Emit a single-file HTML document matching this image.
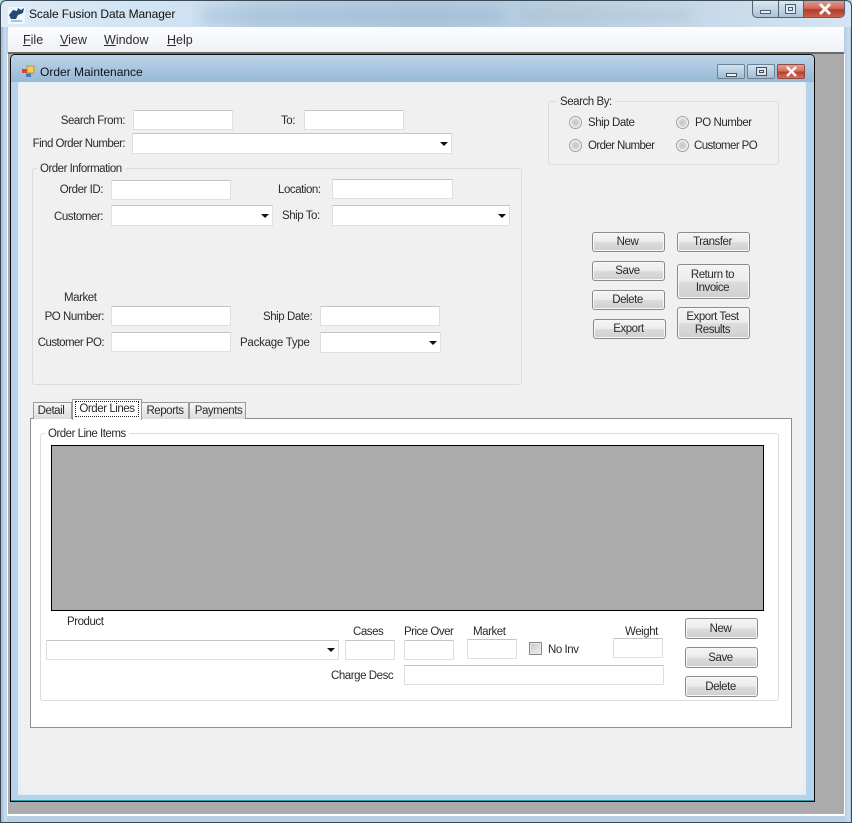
<!DOCTYPE html>
<html><head><meta charset="utf-8"><style>
html,body{margin:0;padding:0;width:852px;height:823px;overflow:hidden}
body{position:relative;background:#b9d3ea;font:11.5px "Liberation Sans",sans-serif;color:#222;letter-spacing:-.45px}
div,span{position:absolute;box-sizing:border-box}
.l{white-space:nowrap;line-height:14px;height:15px;padding-top:1px;color:#2a2a2a}
.r{text-align:right}
.c{text-align:center}
.i{background:#fff;border:1px solid #dfdfdf;border-top-color:#c4c4c4;border-radius:1px}
.a{width:0;height:0;border-left:4px solid transparent;border-right:4px solid transparent;border-top:4px solid #111}
.g{border:1px solid #dcdcdc;border-radius:3px}
.t{background:#f0f0f0;padding:1px 3px 0;white-space:nowrap;line-height:14px;height:14px;color:#2a2a2a}
.b{border:1px solid #8a8a8a;border-radius:3px;background:linear-gradient(#f4f4f4 0,#ececec 48%,#dcdcdc 52%,#cfcfcf 100%);box-shadow:inset 0 0 0 1px #f8f8f8;text-align:center;line-height:13px;color:#2a2a2a;display:flex;align-items:center;justify-content:center;padding:1px 2px 0 0}
.o{width:13px;height:13px;border-radius:50%;border:1px solid #a0a0a0;background:radial-gradient(circle,#c8c8c8 0,#d0d0d0 38%,#f4f4f4 66%,#e8e8e8 100%)}
.tab{background:linear-gradient(#f6f6f6,#dcdcdc);border:1px solid #9a9a9a;border-bottom:0;line-height:16px;text-align:center;color:#2a2a2a}
u{text-decoration:underline}
.m{letter-spacing:0;font-size:12.5px}
</style></head><body>
<!-- frame -->
<div style="left:0;top:0;width:852px;height:823px;background:linear-gradient(90deg,#9fbbd3 0,#c7dcee 4px,#b6cfe4 8px,#b6cfe4 844px,#c9def0 848px,#8ea9c0 852px);border:1px solid #3c4a55;border-radius:6px 6px 0 0"></div>
<div style="left:1px;top:1px;width:850px;height:26px;background:linear-gradient(90deg,#dcebf7 0,#cfe2f2 22%,#b9d0e4 30%,#b0c9df 50%,#b9d0e3 68%,#c9dbea 85%,#d5e5f2 100%);border-radius:6px 6px 0 0;overflow:hidden">
<div style="left:200px;top:8px;width:300px;height:14px;background:#8fabc8;filter:blur(5px);opacity:.3"></div>
<div style="left:520px;top:8px;width:170px;height:12px;background:#a6b8c0;filter:blur(5px);opacity:.3"></div>
</div>
<div style="left:8px;top:7px;width:17px;height:17px;background:#f2f6f8"></div>
<svg style="position:absolute;left:8px;top:7px" width="17" height="17" viewBox="0 0 17 17"><path d="M1 8 L5 3 L9 4 L10 1 L13 3 L16 1 L15 6 L10 8 L8 12 L3 12Z" fill="#1f4d78"/><path d="M3 14h11" stroke="#6e93b0" stroke-width="1"/></svg>
<div class="l" style="left:29px;top:6px;font-size:12px;color:#111;letter-spacing:-.1px">Scale Fusion Data Manager</div>
<!-- caption buttons -->
<div style="left:752px;top:1px;width:93px;height:17px;border:1px solid #55626e;border-top:0;border-radius:0 0 5px 5px;overflow:hidden;background:linear-gradient(#dbe8f3,#aac2d7)">
<div style="left:25px;top:0;width:1px;height:16px;background:#55626e"></div>
<div style="left:50px;top:0;width:1px;height:16px;background:#55626e"></div>
<div style="left:51px;top:0;width:41px;height:16px;background:linear-gradient(#dd9a90 0,#cf6a5c 45%,#b8392a 55%,#c9604f 100%)"></div>
<div style="left:7px;top:9px;width:11px;height:4px;background:#e9eff5;border:1px solid #4f5d6a"></div>
<div style="left:32px;top:3px;width:11px;height:10px;border:1px solid #4f5d6a;background:#dfe9f2"><div style="left:2px;top:2px;width:5px;height:4px;border:1px solid #4f5d6a"></div></div>
<svg style="position:absolute;left:65px;top:2px" width="14" height="12" viewBox="0 0 14 12"><path d="M2 1 L12 11 M12 1 L2 11" stroke="#f4f4f4" stroke-width="3"/></svg>
</div>
<!-- menu -->
<div style="left:8px;top:27px;width:836px;height:25px;background:linear-gradient(#fdfdfe,#eef1f5)"></div>
<div style="left:8px;top:52px;width:836px;height:2px;background:#6a6a6a"></div>
<div class="l m" style="left:23px;top:32px"><u>F</u>ile</div>
<div class="l m" style="left:60px;top:32px"><u>V</u>iew</div>
<div class="l m" style="left:104px;top:32px"><u>W</u>indow</div>
<div class="l m" style="left:167px;top:32px"><u>H</u>elp</div>
<!-- MDI -->
<div style="left:8px;top:54px;width:836px;height:760px;background:#ababab"></div>
<div style="left:8px;top:814px;width:836px;height:2px;background:#fff"></div>
<div style="left:7px;top:54px;width:1px;height:762px;background:#fff"></div>
<div style="left:844px;top:54px;width:1px;height:762px;background:#fff"></div>
<!-- child -->
<div style="left:10px;top:54px;width:805px;height:748px;background:#b6d3ec;border:1px solid #0c0c0c;border-bottom-width:2px;border-radius:5px 5px 0 0"></div>
<div style="left:11px;top:800px;width:803px;height:1px;background:#2f9fb0"></div>
<div style="left:11px;top:55px;width:803px;height:27px;background:linear-gradient(#bcd3e8 0,#97b9d6 100%);border-radius:4px 4px 0 0"></div>
<svg style="position:absolute;left:21px;top:65px" width="14" height="13" viewBox="0 0 14 13"><rect x="6" y="1" width="7" height="7" fill="#f4cf57" stroke="#b8962f"/><rect x="1" y="4" width="5" height="4" fill="#d9452f"/><rect x="5" y="8.5" width="5" height="3.5" fill="#4a79c4"/></svg>
<div class="l" style="left:40px;top:64px;font-size:12px;color:#111;letter-spacing:0">Order Maintenance</div>
<div style="left:717px;top:64px;width:28px;height:15px;border:1px solid #6d8298;border-radius:2px;background:linear-gradient(#d3e2ef,#9fbbd3)"><div style="left:8px;top:8px;width:11px;height:4px;background:#eef3f7;border:1px solid #444f5a"></div></div>
<div style="left:747px;top:64px;width:28px;height:15px;border:1px solid #6d8298;border-radius:2px;background:linear-gradient(#d3e2ef,#9fbbd3)"><div style="left:8px;top:2px;width:11px;height:9px;background:#dde7f0;border:1px solid #444f5a"><div style="left:2px;top:2px;width:5px;height:3px;border:1px solid #444f5a"></div></div></div>
<div style="left:777px;top:64px;width:28px;height:15px;border:1px solid #8e4a42;border-radius:2px;background:linear-gradient(#e0a196 0,#d2705f 45%,#bd3d2c 55%,#d2705f 100%)"><svg style="position:absolute;left:7px;top:1px" width="13" height="11" viewBox="0 0 13 11"><path d="M2 1 L11 10 M11 1 L2 10" stroke="#f5f5f5" stroke-width="2.6"/></svg></div>
<!-- client -->
<div style="left:18px;top:82px;width:788px;height:713px;background:#f0f0f0;box-shadow:inset 0 0 5px 1px #e2edf6"></div>

<!-- top search -->
<div class="l r" style="left:30px;top:113px;width:95px">Search From:</div>
<div class="i" style="left:133px;top:110px;width:100px;height:20px"></div>
<div class="l" style="left:281px;top:113px">To:</div>
<div class="i" style="left:304px;top:110px;width:100px;height:20px"></div>
<div class="l r" style="left:20px;top:136px;width:105px;letter-spacing:-.55px">Find Order Number:</div>
<div class="i" style="left:132px;top:133px;width:320px;height:21px"></div>
<div class="a" style="left:440px;top:142px"></div>

<!-- Search By -->
<div class="g" style="left:548px;top:101px;width:231px;height:64px"></div>
<div class="t" style="left:557px;top:94px">Search By:</div>
<div class="o" style="left:569px;top:116px"></div>
<div class="l" style="left:588px;top:115px">Ship Date</div>
<div class="o" style="left:676px;top:116px"></div>
<div class="l" style="left:695px;top:115px">PO Number</div>
<div class="o" style="left:569px;top:139px"></div>
<div class="l" style="left:588px;top:138px;letter-spacing:-.6px">Order Number</div>
<div class="o" style="left:676px;top:139px"></div>
<div class="l" style="left:694px;top:138px;letter-spacing:-.6px">Customer PO</div>

<!-- Order Information -->
<div class="g" style="left:32px;top:168px;width:490px;height:217px"></div>
<div class="t" style="left:37px;top:161px;letter-spacing:-.5px">Order Information</div>
<div class="l r" style="left:40px;top:182px;width:63px">Order ID:</div>
<div class="i" style="left:111px;top:180px;width:120px;height:20px"></div>
<div class="l" style="left:278px;top:182px">Location:</div>
<div class="i" style="left:332px;top:179px;width:121px;height:20px"></div>
<div class="l r" style="left:40px;top:209px;width:63px">Customer:</div>
<div class="i" style="left:111px;top:205px;width:162px;height:21px"></div>
<div class="a" style="left:261px;top:214px"></div>
<div class="l" style="left:282px;top:208px">Ship To:</div>
<div class="i" style="left:332px;top:205px;width:178px;height:21px"></div>
<div class="a" style="left:498px;top:214px"></div>
<div class="l" style="left:64px;top:290px">Market</div>
<div class="l r" style="left:30px;top:309px;width:74px">PO Number:</div>
<div class="i" style="left:111px;top:306px;width:120px;height:20px"></div>
<div class="l" style="left:263px;top:309px">Ship Date:</div>
<div class="i" style="left:320px;top:306px;width:120px;height:20px"></div>
<div class="l r" style="left:20px;top:335px;width:84px;letter-spacing:-.55px">Customer PO:</div>
<div class="i" style="left:111px;top:332px;width:120px;height:20px"></div>
<div class="l" style="left:240px;top:335px;letter-spacing:-.25px">Package Type</div>
<div class="i" style="left:320px;top:332px;width:121px;height:21px"></div>
<div class="a" style="left:429px;top:341px"></div>

<!-- Buttons -->
<div class="b" style="left:592px;top:232px;width:73px;height:20px">New</div>
<div class="b" style="left:592px;top:261px;width:73px;height:20px">Save</div>
<div class="b" style="left:592px;top:290px;width:73px;height:20px">Delete</div>
<div class="b" style="left:593px;top:319px;width:73px;height:20px">Export</div>
<div class="b" style="left:677px;top:232px;width:73px;height:20px">Transfer</div>
<div class="b" style="left:677px;top:264px;width:73px;height:35px">Return to<br>Invoice</div>
<div class="b" style="left:677px;top:307px;width:73px;height:32px">Export Test<br>Results</div>

<!-- Tabs -->
<div style="left:30px;top:418px;width:762px;height:310px;background:#fff;border:1px solid #8e8e8e"></div>
<div class="tab" style="left:33px;top:402px;width:39px;height:17px;padding-right:3px">Detail</div>
<div class="tab" style="left:141px;top:402px;width:48px;height:17px">Reports</div>
<div class="tab" style="left:189px;top:402px;width:57px;height:17px;padding-left:2px">Payments</div>
<div style="left:72px;top:399px;width:70px;height:21px;background:#fff;border:1px solid #9a9a9a;border-bottom:0"></div>
<div class="l c" style="left:75px;top:401px;width:64px;height:16px;border:1px dotted #222;line-height:12px">Order Lines</div>

<!-- Group -->
<div class="g" style="left:40px;top:433px;width:739px;height:268px"></div>
<div class="l" style="left:45px;top:426px;padding:1px 3px 0;height:14px;background:#fff;letter-spacing:-.5px">Order Line Items</div>
<div style="left:51px;top:445px;width:713px;height:166px;background:#ababab;border:1px solid #000"></div>

<div class="l" style="left:67px;top:614px">Product</div>
<div class="i" style="left:46px;top:640px;width:293px;height:20px"></div>
<div class="a" style="left:327px;top:648px"></div>
<div class="l" style="left:353px;top:624px">Cases</div>
<div class="i" style="left:345px;top:640px;width:50px;height:20px"></div>
<div class="l" style="left:404px;top:624px;letter-spacing:-.5px">Price Over</div>
<div class="i" style="left:404px;top:640px;width:50px;height:20px"></div>
<div class="l" style="left:473px;top:624px">Market</div>
<div class="i" style="left:467px;top:639px;width:50px;height:20px"></div>
<div style="left:529px;top:642px;width:13px;height:13px;border:1px solid #8a8a8a;background:linear-gradient(135deg,#c9c9c9,#f0f0f0);box-shadow:inset 0 0 0 1px #e8e8e8"></div>
<div class="l" style="left:548px;top:642px">No Inv</div>
<div class="l" style="left:625px;top:624px">Weight</div>
<div class="i" style="left:613px;top:638px;width:50px;height:20px"></div>
<div class="l" style="left:331px;top:668px">Charge Desc</div>
<div class="i" style="left:404px;top:665px;width:260px;height:20px"></div>
<div class="b" style="left:685px;top:618px;width:73px;height:21px">New</div>
<div class="b" style="left:685px;top:647px;width:73px;height:21px">Save</div>
<div class="b" style="left:685px;top:676px;width:73px;height:21px">Delete</div>
</body></html>
